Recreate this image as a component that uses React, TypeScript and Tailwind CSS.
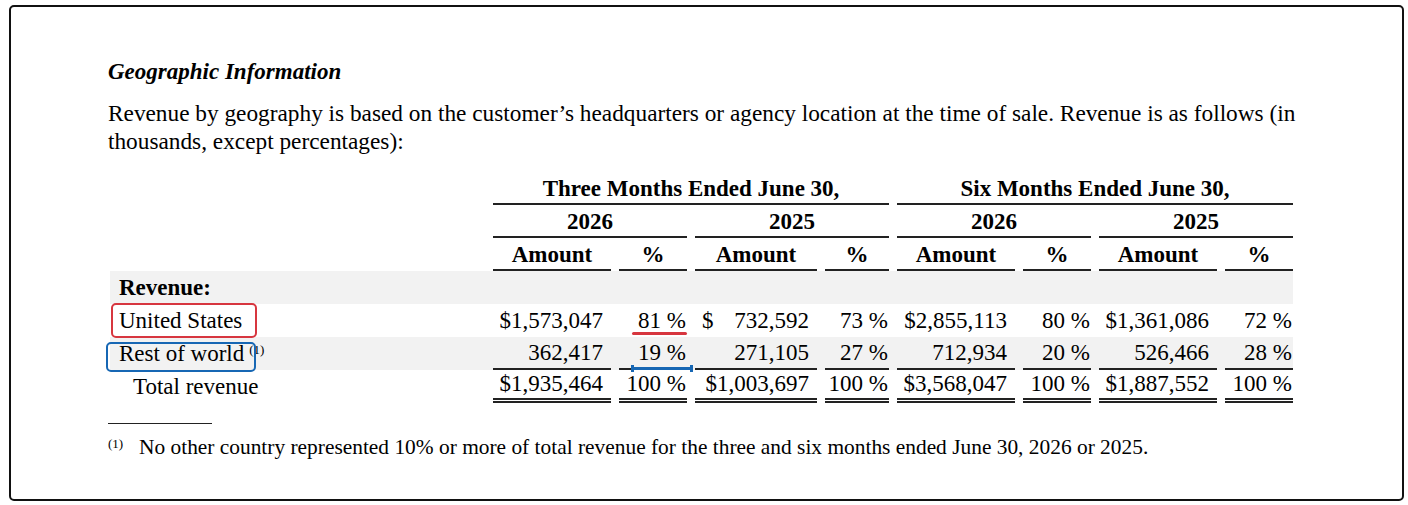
import React from "react";

const cols =
  "grid grid-cols-[383px_118px_76px_130px_72px_126px_76px_126px_76px]";

type Cell = { text: React.ReactNode; kind: "amt" | "pct" };

function HeadCell({
  children,
  span,
  first,
}: {
  children: React.ReactNode;
  span: string;
  first?: boolean;
}) {
  return (
    <div className={`${span} h-[33px] ${first ? "" : "pl-2"}`}>
      <div className="h-full border-b-2 border-[#222] flex items-center justify-center font-bold pt-[3px]">
        {children}
      </div>
    </div>
  );
}

function ValueCell({
  cell,
  first,
  line,
  bg,
}: {
  cell: Cell;
  first?: boolean;
  line?: "single" | "double";
  bg?: boolean;
}) {
  const border =
    line === "single"
      ? "border-b-2 border-[#222]"
      : line === "double"
      ? "border-b-[5px] border-double border-[#222]"
      : "";
  return (
    <div className={`h-[33px] ${first ? "" : "pl-2"} ${bg ? "bg-[#f2f2f2]" : ""}`}>
      <div
        className={`h-full ${border} flex items-center justify-end ${
          cell.kind === "amt" ? "pr-[8px]" : "pr-px"
        }`}
      >
        {cell.text}
      </div>
    </div>
  );
}

const us: Cell[] = [
  { text: "$1,573,047", kind: "amt" },
  { text: "81 %", kind: "pct" },
  {
    text: (
      <span className="flex w-full justify-between pl-[7px]">
        <span>$</span>
        <span>732,592</span>
      </span>
    ),
    kind: "amt",
  },
  { text: "73 %", kind: "pct" },
  { text: "$2,855,113", kind: "amt" },
  { text: "80 %", kind: "pct" },
  { text: "$1,361,086", kind: "amt" },
  { text: "72 %", kind: "pct" },
];

const row: Cell[] = [
  { text: "362,417", kind: "amt" },
  { text: "19 %", kind: "pct" },
  { text: "271,105", kind: "amt" },
  { text: "27 %", kind: "pct" },
  { text: "712,934", kind: "amt" },
  { text: "20 %", kind: "pct" },
  { text: "526,466", kind: "amt" },
  { text: "28 %", kind: "pct" },
];

const total: Cell[] = [
  { text: "$1,935,464", kind: "amt" },
  { text: "100 %", kind: "pct" },
  { text: "$1,003,697", kind: "amt" },
  { text: "100 %", kind: "pct" },
  { text: "$3,568,047", kind: "amt" },
  { text: "100 %", kind: "pct" },
  { text: "$1,887,552", kind: "amt" },
  { text: "100 %", kind: "pct" },
];

export default function App() {
  return (
    <div className="relative w-[1408px] h-[505px] bg-white text-black font-['Liberation_Serif',serif] text-[23px] leading-[28px]">
      <div className="absolute left-[9px] top-[5px] w-[1395px] h-[496px] border-2 border-[#111] rounded-[5px]" />

      <div className="pl-[108px] pt-[58px]">
        <h2 className="font-bold italic text-[23px] leading-[28px]">
          Geographic Information
        </h2>
        <p className="mt-[13px] w-[1200px] text-[23.3px]">
          Revenue by geography is based on the customer’s headquarters or agency
          location at the time of sale. Revenue is as follows (in thousands,
          except percentages):
        </p>

        <div className={`${cols} mt-[17px] ml-[2px]`}>
          <div className="h-[33px]" />
          <HeadCell span="col-span-4" first>
            Three Months Ended June 30,
          </HeadCell>
          <HeadCell span="col-span-4">Six Months Ended June 30,</HeadCell>

          <div className="h-[33px]" />
          <HeadCell span="col-span-2" first>
            2026
          </HeadCell>
          <HeadCell span="col-span-2">2025</HeadCell>
          <HeadCell span="col-span-2">2026</HeadCell>
          <HeadCell span="col-span-2">2025</HeadCell>

          <div className="h-[33px]" />
          <HeadCell span="" first>
            Amount
          </HeadCell>
          <HeadCell span="">%</HeadCell>
          <HeadCell span="">Amount</HeadCell>
          <HeadCell span="">%</HeadCell>
          <HeadCell span="">Amount</HeadCell>
          <HeadCell span="">%</HeadCell>
          <HeadCell span="">Amount</HeadCell>
          <HeadCell span="">%</HeadCell>

          <div className="col-span-9 h-[33px] bg-[#f2f2f2] pl-[9px] flex items-center font-bold">
            Revenue:
          </div>

          <div className="h-[33px] pl-[9px] flex items-center">United States</div>
          {us.map((c, i) => (
            <ValueCell key={i} cell={c} first={i === 0} />
          ))}

          <div className="h-[33px] pl-[9px] flex items-center bg-[#f2f2f2]">
            Rest of world
            <span className="text-[13px] leading-none ml-[5px] relative -top-[4px]">(1)</span>
          </div>
          {row.map((c, i) => (
            <ValueCell key={i} cell={c} first={i === 0} line="single" bg />
          ))}

          <div className="h-[33px] pl-[23px] flex items-center">Total revenue</div>
          {total.map((c, i) => (
            <ValueCell key={i} cell={c} first={i === 0} line="double" />
          ))}
        </div>

        <div className="mt-[20px] w-[104px] border-t border-[#222]" />
        <div className="mt-[10px] flex items-center text-[21.4px] leading-[26px]">
          <span className="text-[13px] leading-none w-[31px] relative -top-[4px]">(1)</span>
          <span>
            No other country represented 10% or more of total revenue for the
            three and six months ended June 30, 2026 or 2025.
          </span>
        </div>
      </div>

      {/* annotations */}
      <div className="absolute left-[111px] top-[303px] w-[146px] h-[35px] border-[2.5px] border-[#d7363f] rounded-[5px]" />
      <div className="absolute left-[106px] top-[342px] w-[150px] h-[30px] border-[2.5px] border-[#1767b4] rounded-[5px]" />
      <div className="absolute left-[632px] top-[332px] w-[55px] h-[3px] bg-[#d7363f] rounded-full" />
      <div className="absolute left-[631px] top-[367px] w-[62px] h-[3px] bg-[#1767b4]" />
      <div className="absolute left-[631px] top-[365px] w-[3px] h-[7px] bg-[#1767b4]" />
      <div className="absolute left-[690px] top-[365px] w-[3px] h-[7px] bg-[#1767b4]" />
    </div>
  );
}
